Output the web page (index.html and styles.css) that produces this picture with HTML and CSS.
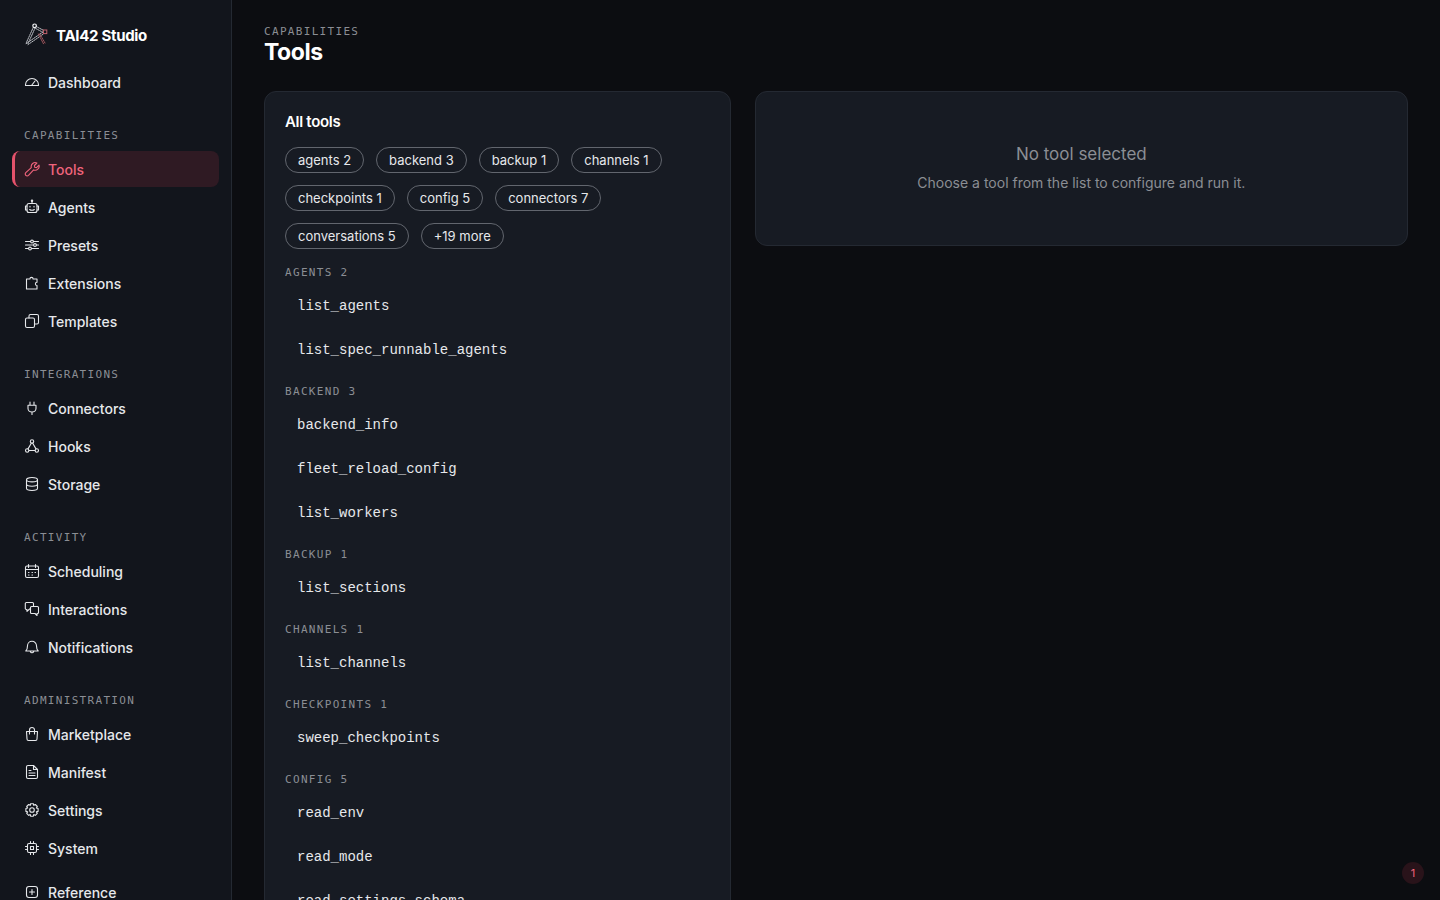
FILE: index.html
```html
<!DOCTYPE html>
<html lang="en">
<head>
    <meta charset="UTF-8">
    <meta name="viewport" content="width=device-width, initial-scale=1.0">
    <title>Tools - TAI42 Studio</title>
    <link rel="stylesheet" href="styles.css">
</head>
<body>
    <div class="app">
        <aside class="sidebar">
            <a class="brand" href="#">
                <svg class="brand-mark" viewBox="0 0 24 24" fill="none" stroke-linecap="round">
                    <path d="M9.4 4.2 2.2 20M11.2 4.8 4 20.6" stroke="#b9bcc2" stroke-width="1" stroke-dasharray="1.4 1"/>
                    <path d="M2.2 20.6 18.6 9.2M4 21.6 19.4 11" stroke="#b9bcc2" stroke-width="1" stroke-dasharray="1.4 1"/>
                    <path d="M12 3.4 20 7.6M11.6 5.4 19 9.4" stroke="#b9bcc2" stroke-width="1" stroke-dasharray="1.4 1"/>
                    <path d="M14.4 11 19.6 21M15.8 11 21 20" stroke="#a5585f" stroke-width="1" stroke-dasharray="1.4 1"/>
                    <circle cx="10.6" cy="2.8" r="1.8" stroke="#f0f1f3" stroke-width="1.2"/>
                    <rect x="19.4" y="7" width="3.4" height="3.6" stroke="#c0616c"/>
                </svg>
                <span>TAI42 Studio</span>
            </a>

            <nav class="nav">
                <a class="nav-item" href="#">
                    <svg class="icon" viewBox="0 0 16 16"><path d="M1.5 11.500v-.7a6.500 6.300 0 0 1 13 0v.7zM7.500 11.500 11 7"/></svg>
                    Dashboard
                </a>

                <h2 class="label">Capabilities</h2>
                <a class="nav-item active" href="#">
                    <svg class="icon" viewBox="0 0 16 16"><path d="M12.9 2 10.4 4.5l.3 1.8 1.800.3L15 4.100a4 4 0 0 1-5.400 4.800L4.500 14.400a1.900 1.900 0 0 1-2.700-2.700L7.300 6.600A4 4 0 0 1 12.900 2z"/></svg>
                    Tools
                </a>
                <a class="nav-item" href="#">
                    <svg class="icon" viewBox="0 0 16 16"><rect x="3" y="4.5" width="10" height="9" rx="2"/><path d="M8 4.500V2M3 7H1.500v4H3M13 7h1.500v4H13M5.700 10.500c1 1 3.600 1 4.600 0"/><circle cx="8" cy="1.700" r=".7"/><path d="M6 7.200v.8M10 7.200v.8"/></svg>
                    Agents
                </a>
                <a class="nav-item" href="#">
                    <svg class="icon" viewBox="0 0 16 16"><path d="M1.500 4.500h5M9.500 4.500h5M1.500 8h8M12.500 8h2M1.500 11.500h3M7.500 11.500h7"/><circle cx="8" cy="4.500" r="1.400"/><circle cx="11" cy="8" r="1.400"/><circle cx="6" cy="11.500" r="1.400"/></svg>
                    Presets
                </a>
                <a class="nav-item" href="#">
                    <svg class="icon" viewBox="0 0 16 16"><path d="M2.500 4h3.400a1.600 1.600 0 1 1 3.200 0H13v3.300a1.600 1.600 0 1 0 0 3.200V14H2.500z"/></svg>
                    Extensions
                </a>
                <a class="nav-item" href="#">
                    <svg class="icon" viewBox="0 0 16 16"><rect x="1.500" y="5" width="9" height="9.500" rx="1.500"/><path d="M5 5V3a1.500 1.500 0 0 1 1.500-1.500H13A1.500 1.500 0 0 1 14.500 3v6.500A1.500 1.500 0 0 1 13 11h-2.500"/></svg>
                    Templates
                </a>

                <h2 class="label">Integrations</h2>
                <a class="nav-item" href="#">
                    <svg class="icon" viewBox="0 0 16 16"><path d="M6 2v3M10 2v3M4 5.200h8v3.300a4 3.500 0 0 1-8 0zM8 12v2.500"/></svg>
                    Connectors
                </a>
                <a class="nav-item" href="#">
                    <svg class="icon" viewBox="0 0 16 16"><circle cx="8" cy="3.500" r="1.700"/><circle cx="3.200" cy="12.500" r="1.700"/><circle cx="12.800" cy="12.500" r="1.700"/><path d="M7.300 5.200 4 10.900M8.700 5.200l3.300 5.700M5 12.500h6"/></svg>
                    Hooks
                </a>
                <a class="nav-item" href="#">
                    <svg class="icon" viewBox="0 0 16 16"><ellipse cx="8" cy="3.700" rx="5.500" ry="2.200"/><path d="M2.500 3.700v8.600c0 1.200 2.500 2.200 5.500 2.200s5.500-1 5.500-2.200V3.700M2.500 8c0 1.200 2.500 2.200 5.500 2.200S13.500 9.200 13.500 8"/></svg>
                    Storage
                </a>

                <h2 class="label">Activity</h2>
                <a class="nav-item" href="#">
                    <svg class="icon" viewBox="0 0 16 16"><rect x="1.500" y="3" width="13" height="11.500" rx="1.500"/><path d="M4.500 1.500v3M11.500 1.500v3M1.500 6.500h13"/><path d="M4.500 9.500h.5M8 9.500h.5M11 9.500h.5M4.500 12h.5M8 12h.5"/></svg>
                    Scheduling
                </a>
                <a class="nav-item" href="#">
                    <svg class="icon" viewBox="0 0 16 16"><path d="M6.500 7.500 5 8.500 3 10.300V8.500h-.7a1 1 0 0 1-1-1v-5a1 1 0 0 1 1-1h6.200a1 1 0 0 1 1 1v3"/><path d="M7.500 5.500h6a1 1 0 0 1 1 1v5a1 1 0 0 1-1 1H13v2l-2-2H7.500a1 1 0 0 1-1-1v-5a1 1 0 0 1 1-1z"/></svg>
                    Interactions
                </a>
                <a class="nav-item" href="#">
                    <svg class="icon" viewBox="0 0 16 16"><path d="M1.800 12c1.200-1.200 1.700-2.500 1.700-5.300a4.500 4.500 0 0 1 9 0c0 2.800.5 4.100 1.700 5.300zM6.300 12.500a1.800 1.800 0 0 0 3.400 0"/></svg>
                    Notifications
                </a>

                <h2 class="label">Administration</h2>
                <a class="nav-item" href="#">
                    <svg class="icon" viewBox="0 0 16 16"><path d="M2.500 5.500h11l-.5 7.500a1.500 1.500 0 0 1-1.500 1.500h-7A1.500 1.500 0 0 1 3 13zM5.500 8V4a2.500 2.500 0 0 1 5 0v4"/></svg>
                    Marketplace
                </a>
                <a class="nav-item" href="#">
                    <svg class="icon" viewBox="0 0 16 16"><path d="M4 1.500h5.500l4 4V13a1.500 1.500 0 0 1-1.500 1.500H4A1.500 1.500 0 0 1 2.500 13V3A1.500 1.500 0 0 1 4 1.500zM9.500 1.500v4h4M5 6.500h2M5 9h6M5 11.500h6"/></svg>
                    Manifest
                </a>
                <a class="nav-item" href="#">
                    <svg class="icon" viewBox="0 0 16 16"><circle cx="8" cy="8" r="2.300"/><path d="M6.600 1.700h2.800l.4 1.700 1.500-.9 2 2-.9 1.500 1.700.5v2.900l-1.700.5.9 1.500-2 2-1.500-.9-.4 1.700H6.600l-.4-1.700-1.500.9-2-2 .9-1.500-1.700-.5V6.500l1.700-.5-.9-1.500 2-2 1.500.9z"/></svg>
                    Settings
                </a>
                <a class="nav-item" href="#">
                    <svg class="icon" viewBox="0 0 16 16"><rect x="3.500" y="3.500" width="9" height="9" rx="1.500"/><rect x="6.500" y="6.500" width="3" height="3"/><path d="M6.500 1.500v2M9.500 1.500v2M6.500 12.500v2M9.500 12.500v2M1.500 6.500h2M1.500 9.500h2M12.500 6.500h2M12.500 9.500h2"/></svg>
                    System
                </a>
            </nav>

            <div class="nav-footer">
                <a class="nav-item" href="#">
                    <svg class="icon" viewBox="0 0 16 16"><rect x="2.500" y="2.500" width="11" height="11" rx="2.500"/><path d="M8 5.500v5M5.500 8h5"/></svg>
                    Reference
                </a>
            </div>
        </aside>

        <main class="main">
            <header class="page-header">
                <p class="eyebrow">Capabilities</p>
                <h1>Tools</h1>
            </header>

            <div class="columns">
                <section class="card">
                    <h2 class="card-title">All tools</h2>

                    <div class="chips">
                        <button class="chip" type="button">agents 2</button>
                        <button class="chip" type="button">backend 3</button>
                        <button class="chip" type="button">backup 1</button>
                        <button class="chip" type="button">channels 1</button>
                        <button class="chip" type="button">checkpoints 1</button>
                        <button class="chip" type="button">config 5</button>
                        <button class="chip" type="button">connectors 7</button>
                        <button class="chip" type="button">conversations 5</button>
                        <button class="chip" type="button">+19 more</button>
                    </div>

                    <div class="group">
                        <h3 class="group-title">agents 2</h3>
                        <button class="tool" type="button">list_agents</button>
                        <button class="tool" type="button">list_spec_runnable_agents</button>
                    </div>
                    <div class="group">
                        <h3 class="group-title">backend 3</h3>
                        <button class="tool" type="button">backend_info</button>
                        <button class="tool" type="button">fleet_reload_config</button>
                        <button class="tool" type="button">list_workers</button>
                    </div>
                    <div class="group">
                        <h3 class="group-title">backup 1</h3>
                        <button class="tool" type="button">list_sections</button>
                    </div>
                    <div class="group">
                        <h3 class="group-title">channels 1</h3>
                        <button class="tool" type="button">list_channels</button>
                    </div>
                    <div class="group">
                        <h3 class="group-title">checkpoints 1</h3>
                        <button class="tool" type="button">sweep_checkpoints</button>
                    </div>
                    <div class="group">
                        <h3 class="group-title">config 5</h3>
                        <button class="tool" type="button">read_env</button>
                        <button class="tool" type="button">read_mode</button>
                        <button class="tool" type="button">read_settings_schema</button>
                    </div>
                </section>

                <section class="card empty">
                    <p class="empty-title">No tool selected</p>
                    <p class="empty-text">Choose a tool from the list to configure and run it.</p>
                </section>
            </div>
        </main>
    </div>

    <button class="badge" type="button">1</button>
</body>
</html>
```
FILE: styles.css
```css
:root {
    --bg: #0c0d11;
    --sidebar: #12151c;
    --card: #171b23;
    --border: #242932;
    --chip-border: #62666e;
    --text: #e6e8eb;
    --heading: #ffffff;
    --muted: #8b8e94;
    --accent: #f0647c;
    --accent-bar: #e5526b;
    --accent-bg: #2f1a23;
    --sans: Inter, "Liberation Sans", sans-serif;
    --mono: "Liberation Mono", monospace;
    --mono-label: "DejaVu Sans Mono", monospace;
}

* {
    margin: 0;
    padding: 0;
    box-sizing: border-box;
}

body {
    font-family: var(--sans);
    font-size: 14px;
    background-color: var(--bg);
    color: var(--text);
}

a {
    color: inherit;
    text-decoration: none;
}

button {
    font: inherit;
    color: inherit;
    background: none;
    border: none;
    cursor: pointer;
}

.app {
    display: flex;
    height: 100vh;
}

/* Sidebar */
.sidebar {
    flex: 0 0 232px;
    padding: 20px 12px;
    background-color: var(--sidebar);
    border-right: 1px solid var(--border);
    overflow-y: auto;
    scrollbar-width: none;
}

.brand {
    display: flex;
    align-items: center;
    gap: 8px;
    height: 30px;
    margin-bottom: 14px;
    padding: 0 12px;
    font-size: 15px;
    font-weight: 700;
    letter-spacing: -0.02em;
    color: var(--heading);
}

.brand-mark {
    width: 24px;
    height: 24px;
}

.nav,
.nav-footer {
    display: flex;
    flex-direction: column;
    gap: 2px;
}

.nav-footer {
    margin-top: 8px;
}

.label,
.eyebrow,
.group-title {
    font-family: var(--mono-label);
    font-size: 11px;
    font-weight: 400;
    line-height: 15px;
    letter-spacing: 0.12em;
    text-transform: uppercase;
    color: var(--muted);
}

.label {
    margin: 26px 0 6px;
    padding: 0 12px;
}

.nav-item {
    display: flex;
    align-items: center;
    gap: 8px;
    height: 36px;
    padding: 0 12px;
    border-radius: 8px;
    font-size: 14px;
    font-weight: 500;
}

.nav-item.active {
    padding-left: 9px;
    border-left: 3px solid var(--accent-bar);
    background-color: var(--accent-bg);
    color: var(--accent);
}

.icon {
    width: 16px;
    height: 16px;
    fill: none;
    stroke: currentColor;
    stroke-width: 1.1;
    stroke-linecap: round;
    stroke-linejoin: round;
}

/* Main */
.main {
    flex: 1;
    padding: 24px 32px;
    overflow-y: auto;
    scrollbar-width: none;
}

.page-header {
    margin-bottom: 26px;
}

h1 {
    font-size: 23px;
    font-weight: 700;
    line-height: 26px;
    letter-spacing: -0.02em;
    color: var(--heading);
}

.columns {
    display: grid;
    grid-template-columns: 5fr 7fr;
    align-items: start;
    gap: 24px;
}

.card {
    padding: 20px;
    background-color: var(--card);
    border: 1px solid var(--border);
    border-radius: 12px;
}

.card-title {
    margin-bottom: 15px;
    font-size: 15px;
    font-weight: 600;
    line-height: 20px;
    letter-spacing: -0.02em;
    color: var(--heading);
}

.chips {
    display: flex;
    flex-wrap: wrap;
    gap: 12px;
    margin-bottom: 16px;
}

.chip {
    height: 26px;
    padding: 0 12px;
    border: 1px solid var(--chip-border);
    border-radius: 13px;
    font-size: 13px;
}

.group {
    margin-bottom: 12px;
}

.group-title {
    margin-bottom: 4px;
}

.tool {
    display: block;
    width: 100%;
    height: 44px;
    padding: 0 12px;
    border-radius: 8px;
    font-family: var(--mono);
    font-size: 14px;
    text-align: left;
}

.empty {
    padding: 48px 20px 52px;
    text-align: center;
    color: var(--muted);
}

.empty-title {
    margin-bottom: 4px;
    font-size: 17px;
    line-height: 28px;
}

.empty-text {
    font-size: 14px;
    line-height: 21px;
}

.badge {
    position: fixed;
    right: 16px;
    bottom: 16px;
    width: 22px;
    height: 22px;
    border-radius: 50%;
    background-color: #29131a;
    color: var(--accent);
    font-size: 11px;
}
```
